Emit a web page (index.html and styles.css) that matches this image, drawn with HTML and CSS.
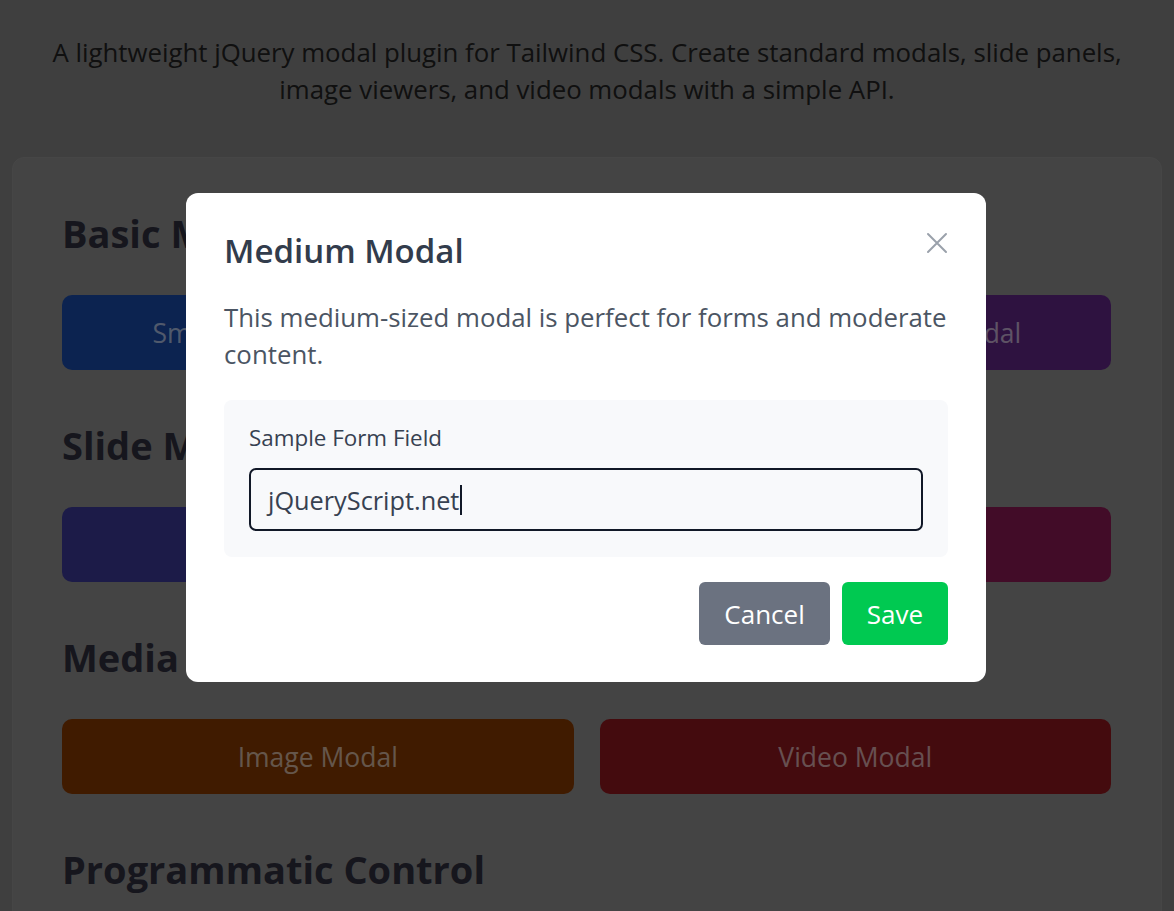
FILE: index.html
```html
<!DOCTYPE html>
<html lang="en">
<head>
<meta charset="utf-8">
<title>Tailwind Modal Demo</title>
<link rel="stylesheet" href="styles.css">
</head>
<body>
<header class="intro">
  <p class="lead">A lightweight jQuery modal plugin for Tailwind CSS. Create standard modals, slide panels, image viewers, and video modals with a simple API.</p>
</header>
<main class="card">
  <section class="group">
    <h2 class="group-title">Basic Modals</h2>
    <div class="row row-3">
      <button class="demo-btn blue">Small Modal</button>
      <button class="demo-btn green">Medium Modal</button>
      <button class="demo-btn purple">Large Modal</button>
    </div>
  </section>
  <section class="group">
    <h2 class="group-title">Slide Modals</h2>
    <div class="row row-2">
      <button class="demo-btn indigo">Slide from Left</button>
      <button class="demo-btn pink">Slide from Right</button>
    </div>
  </section>
  <section class="group">
    <h2 class="group-title">Media Modals</h2>
    <div class="row row-2">
      <button class="demo-btn orange">Image Modal</button>
      <button class="demo-btn red">Video Modal</button>
    </div>
  </section>
  <section class="group">
    <h2 class="group-title">Programmatic Control</h2>
  </section>
</main>

<div class="backdrop">
  <div class="modal" role="dialog" aria-labelledby="modal-title">
    <div class="modal-head">
      <h3 class="modal-title" id="modal-title">Medium Modal</h3>
      <button class="close-btn" aria-label="Close">
        <svg viewBox="0 0 24 24" width="24" height="24" fill="none" stroke="currentColor" stroke-width="2" stroke-linecap="round"><path d="M3 3L21 21M21 3L3 21"/></svg>
      </button>
    </div>
    <p class="modal-text">This medium-sized modal is perfect for forms and moderate content.</p>
    <div class="form-box">
      <label class="field-label" for="sample">Sample Form Field</label>
      <div class="field-input" id="sample" role="textbox" aria-label="Sample Form Field">jQueryScript.net<span class="caret"></span></div>
    </div>
    <div class="modal-foot">
      <button class="act-btn cancel">Cancel</button>
      <button class="act-btn save">Save</button>
    </div>
  </div>
</div>
</body>
</html>
```

FILE: styles.css
```css
* { box-sizing: border-box; }

html, body {
  margin: 0;
  padding: 0;
}

body {
  background: #7e7e7e;
  font-family: "Open Sans", "Noto Sans", sans-serif;
  height: 911px;
  overflow: hidden;
}

.intro {
  padding: 34px 20px 0;
  display: flex;
  justify-content: center;
}

.lead {
  margin: 0;
  max-width: 1100px;
  text-align: center;
  font-size: 25.8px;
  line-height: 37px;
  color: #202020;
}

.card {
  margin: 49px 12px 0;
  background: #888888;
  border: 1px solid #8d8d8d;
  border-radius: 12px;
  padding: 51px 50px 60px 49px;
}

.group { margin-bottom: 51px; }

.group-title {
  margin: 0 0 38px;
  font-size: 38px;
  line-height: 48px;
  font-weight: 700;
  color: #2c2c3a;
}

.row {
  display: grid;
  gap: 26px;
}
.row-3 { grid-template-columns: repeat(3, 1fr); }
.row-2 { grid-template-columns: repeat(2, 1fr); }

.demo-btn {
  height: 75px;
  border: 0;
  border-radius: 10px;
  font-family: inherit;
  font-size: 26.5px;
  color: rgba(255, 255, 255, 0.6);
}
.blue { background: #1846a0; }
.green { background: #0a8c40; }
.purple { background: #5c2480; }
.indigo { background: #383690; }
.pink { background: #841850; }
.orange { background: #803600; }
.red { background: #88161c; }

.backdrop {
  position: fixed;
  inset: 0;
  background: rgba(0, 0, 0, 0.5);
  display: flex;
  justify-content: center;
  align-items: flex-start;
  padding: 193px 2px 0 0;
}

.modal {
  width: 800px;
  background: #ffffff;
  border-radius: 12px;
  padding: 38px 38px 37px 38px;
}

.modal-head {
  display: flex;
  justify-content: space-between;
  align-items: flex-start;
}

.modal-title {
  margin: 0;
  font-size: 33px;
  line-height: 40px;
  font-weight: 600;
  color: #323c4c;
}

.close-btn {
  border: 0;
  background: none;
  padding: 0;
  margin: 0 -1px 0 0;
  width: 24px;
  height: 24px;
  color: #9aa1ab;
  display: flex;
}

.modal-text {
  margin: 28px 0 27px;
  font-size: 25.8px;
  line-height: 37px;
  color: #4b5563;
}

.form-box {
  background: #f8f9fb;
  border-radius: 8px;
  padding: 25px 25px 26px;
}

.field-label {
  display: block;
  font-size: 22.4px;
  line-height: 26px;
  color: #374151;
  margin-bottom: 17px;
}

.field-input {
  display: flex;
  align-items: center;
  width: 100%;
  height: 63px;
  border: 2px solid #111827;
  border-radius: 7px;
  background: #f8f9fb;
  padding: 0 17px;
  font-size: 25.3px;
  color: #374151;
}

.caret {
  display: inline-block;
  width: 2px;
  height: 30px;
  margin-left: 1px;
  background: #111827;
}

.modal-foot {
  margin-top: 25px;
  display: flex;
  justify-content: flex-end;
  gap: 12px;
}

.act-btn {
  height: 63px;
  border: 0;
  border-radius: 6px;
  padding: 0 25px;
  font-family: inherit;
  font-size: 26px;
  color: #ffffff;
}
.cancel { background: #6b7280; }
.save { background: #00c951; }
```
